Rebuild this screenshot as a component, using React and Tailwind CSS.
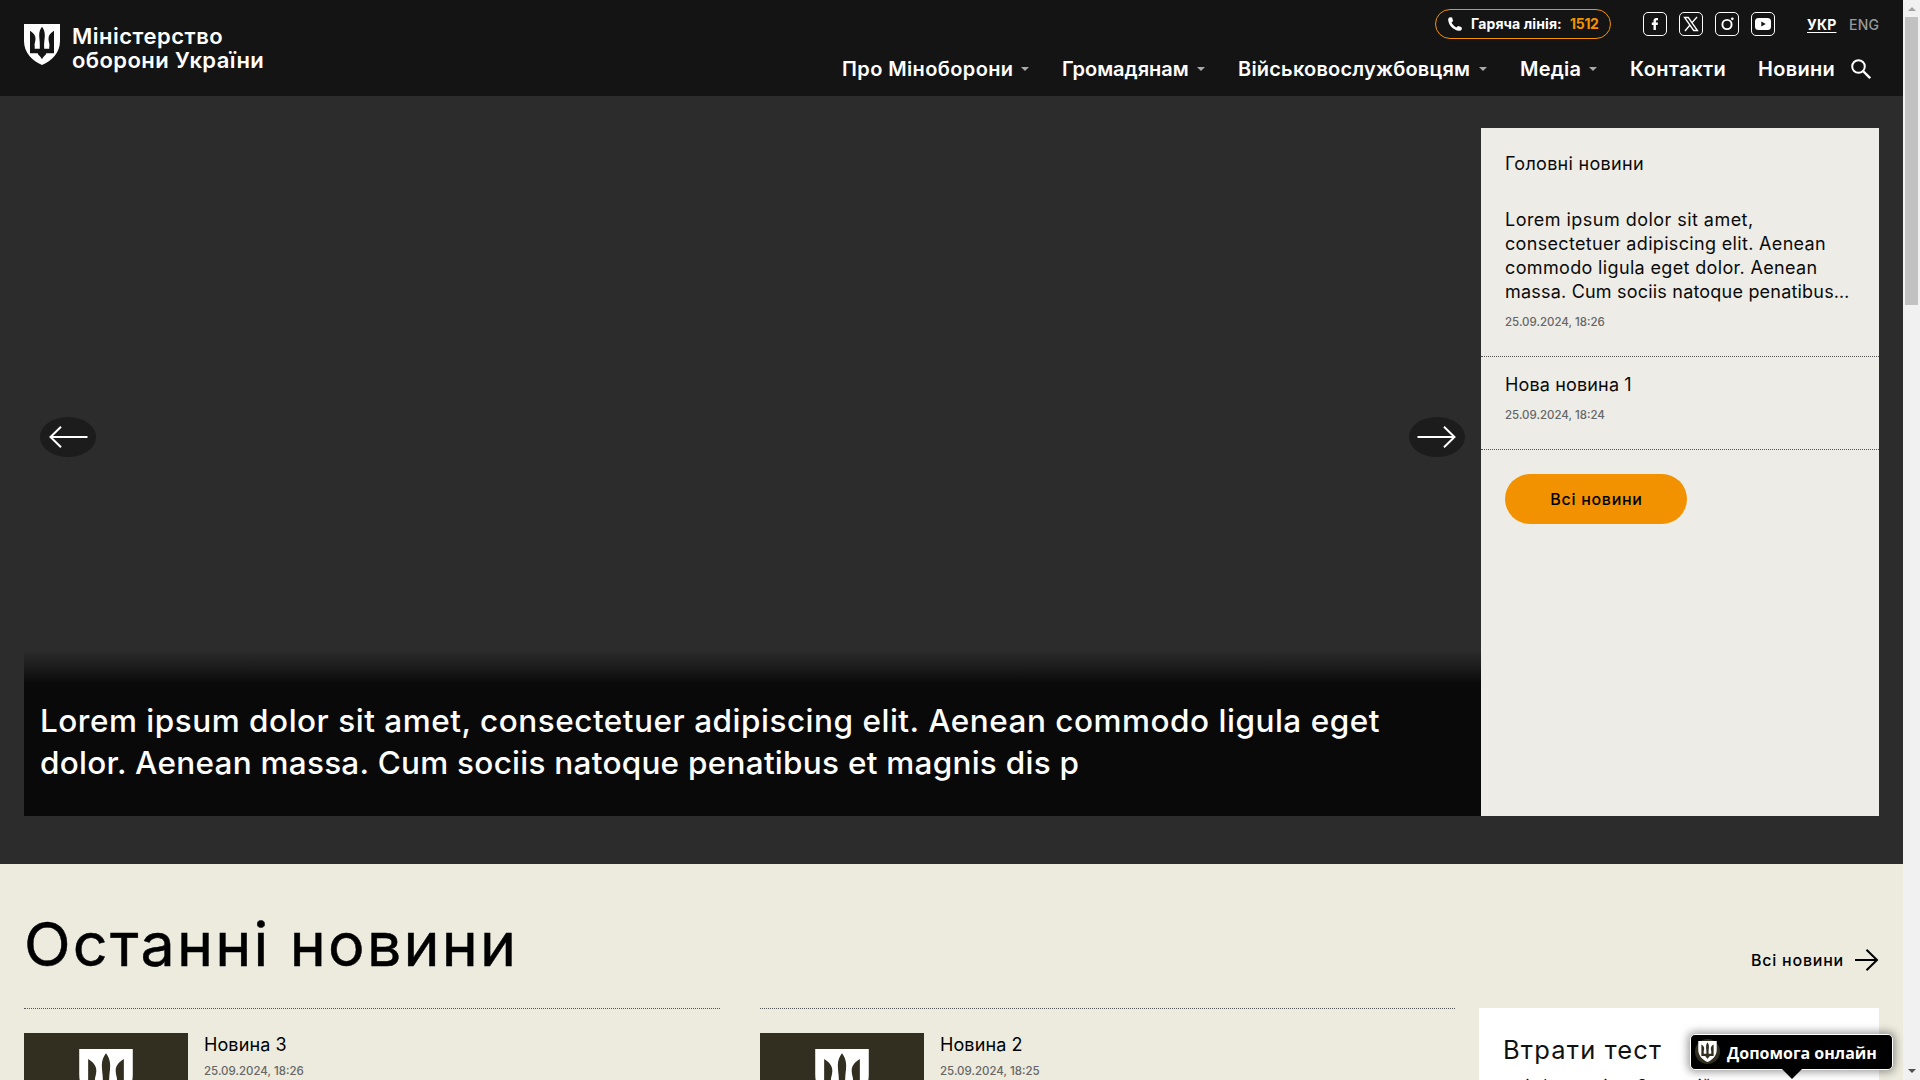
import React from "react";

function Shield({ className, bg }) {
  return (
    <svg viewBox="0 0 36 41" className={className}>
      <path d="M0 0H36V17C36 29 27.5 37 18 41C8.500 37 0 29 0 17Z" fill="#fff" />
      <path
        d="M18 2.800C19.600 4.800 20.800 7.500 20.800 11C20.800 15.500 19.800 18 20.200 24.800H25.300V22.500C26 20 24.500 18 24.500 14.500C24.500 11.500 26.500 8.800 30 6.800V29.300H22.300C21.800 31.500 19.500 32 18 35.300C16.500 32 14.200 31.500 13.700 29.300H6V6.800C9.500 8.800 11.500 11.500 11.500 14.500C11.500 18 10 20 10.700 22.500V24.800H15.800C16.200 18 15.200 15.500 15.200 11C15.200 7.500 16.400 4.800 18 2.800Z"
        fill={bg}
      />
    </svg>
  );
}

const nav = [
  { t: "Про Міноборони", c: "w-[220px] tracking-[0.38px]", m: true },
  { t: "Громадянам", c: "w-[176px] tracking-[0px]", m: true },
  { t: "Військовослужбовцям", c: "w-[282px] tracking-[0.2px]", m: true },
  { t: "Медіа", c: "w-[110px] tracking-[0.2px]", m: true },
  { t: "Контакти", c: "w-[128px] tracking-[0.45px]" },
  { t: "Новини", c: "w-[93px] tracking-[0.3px]" },
];

function Social({ children }) {
  return (
    <svg viewBox="0 0 24 24" className="h-6 w-6" fill="none">
      <rect x="0.5" y="0.5" width="23" height="23" rx="4.500" stroke="#fff" strokeWidth="1" />
      {children}
    </svg>
  );
}

function Header() {
  return (
    <header className="flex h-24 justify-between bg-[#141414] pl-6 text-white">
      <div className="flex pt-6">
        <Shield className="h-[41px] w-9" bg="#141414" />
        <div className="ml-3 text-[22px] leading-6 font-semibold whitespace-nowrap">
          <div className="tracking-[0.5px]">Міністерство</div>
          <div className="tracking-[0.42px]">оборони України</div>
        </div>
      </div>
      <div className="flex w-[1061px] flex-col">
        <div className="flex h-12 items-start justify-end pt-[9px] pr-6">
          <div className="flex h-[30px] w-[176px] items-center rounded-full border border-[#f39200] pl-[11px] text-sm font-bold whitespace-nowrap">
            <svg viewBox="0 0 16 16" className="h-4 w-4" fill="#fff">
              <path d="M3.300 1.200L5.100 1.500L6.100 5L4.500 6.600C5.500 8.700 7.200 10.400 9.300 11.500L11 9.900L14.400 10.900L14.900 12.800C14.500 14.300 13.400 15 12 14.800C6.500 14.200 1.700 9.400 1.200 4C1 2.600 1.800 1.500 3.300 1.200Z" />
            </svg>
            <span className="w-[107px] pl-2 tracking-[0.1px]">Гаряча лінія:</span>
            <span className="tracking-[-0.3px] text-[#f39200]">1512</span>
          </div>
          <div className="mt-[3px] ml-8 flex gap-3">
            <Social>
              <path d="M10.500 18V12.900H8.800V10.500H10.500V9C10.500 7 11.500 6 13.300 6H15V8.300H13.900C13.200 8.300 12.900 8.600 12.900 9.200V10.500H15L14.700 12.900H12.900V18Z" fill="#fff" />
            </Social>
            <Social>
              <path d="M5.500 5.500H9.300L18.500 18.500H14.700Z" stroke="#fff" strokeWidth="1.300" />
              <path d="M18 5L12.900 10.900M11 13L6 19" stroke="#fff" strokeWidth="1.400" />
            </Social>
            <Social>
              <circle cx="12" cy="12.500" r="4.600" stroke="#fff" strokeWidth="1.900" />
              <circle cx="17.300" cy="6.800" r="1.400" fill="#fff" />
            </Social>
            <Social>
              <rect x="4" y="6" width="16" height="12" rx="3.500" fill="#fff" />
              <path d="M10.300 9.400V14.600L14.700 12Z" fill="#141414" />
            </Social>
          </div>
          <div className="ml-8 flex pt-[5px] text-sm leading-[22px] font-semibold">
            <span className="w-[42px] font-bold tracking-[0.2px] underline underline-offset-2">УКР</span>
            <span className="w-[30px] font-medium tracking-[0.2px] text-[#999]">ENG</span>
          </div>
        </div>
        <nav className="mt-[9px] flex h-6 items-center text-[20px] leading-6 font-semibold whitespace-nowrap">
          {nav.map((n) => (
            <div key={n.t} className={`flex shrink-0 items-center ${n.m ? "pr-[33px]" : ""} ${n.c}`}>
              {n.t}
              {n.m && (
                <svg viewBox="0 0 8 4" className="ml-auto h-1 w-2 shrink-0">
                  <path d="M0 0H8L4 4Z" fill="#aaa" />
                </svg>
              )}
            </div>
          ))}
          <svg viewBox="0 0 20 20" className="h-5 w-5 shrink-0" fill="none" stroke="#fff" strokeWidth="2">
            <circle cx="7.500" cy="7.500" r="6.300" />
            <path d="M12 12L19.200 19.200" strokeWidth="2.400" />
          </svg>
        </nav>
      </div>
    </header>
  );
}

function SlideArrow({ flip }) {
  return (
    <div className="flex h-10 w-14 items-center justify-center rounded-[50%] bg-[#1c1c1c]">
      <svg viewBox="0 0 39 22" className={flip ? "mr-px h-[22px] w-[39px] rotate-180" : "h-[22px] w-[39px]"} fill="none" stroke="#fff" strokeWidth="2">
        <path d="M38.500 11H1.500M12 0.700L1.500 11L12 21.300" />
      </svg>
    </div>
  );
}

function Hero() {
  return (
    <section className="flex h-[768px] bg-[#2c2c2c] px-6 pt-8 pb-12">
      <div className="flex w-[1457px] flex-col">
        <div className="flex flex-1 items-start justify-between px-4 pt-[289px]">
          <SlideArrow />
          <SlideArrow flip />
        </div>
        <div className="h-[166px] bg-[linear-gradient(to_bottom,rgba(9,9,9,0)_0px,rgba(9,9,9,0.4)_15px,rgba(9,9,9,1)_34px)] pt-[50px] pl-4 text-[31.500px] leading-[42px] font-medium whitespace-nowrap text-white">
          <div className="tracking-[0.51px]">Lorem ipsum dolor sit amet, consectetuer adipiscing elit. Aenean commodo ligula eget</div>
          <div className="tracking-[0.26px]">dolor. Aenean massa. Cum sociis natoque penatibus et magnis dis p</div>
        </div>
      </div>
      <aside className="w-[398px] bg-[#edece6] pt-6 text-[18px] leading-6 whitespace-nowrap text-[#0a0a0a]">
        <h2 className="pl-6 tracking-[0.3px]">Головні новини</h2>
        <div className="mt-8 border-b border-dotted border-[#555] pb-[26px] pl-6">
          <div className="tracking-[0.46px]">Lorem ipsum dolor sit amet,</div>
          <div className="tracking-[0.33px]">consectetuer adipiscing elit. Aenean</div>
          <div className="tracking-[0.35px]">commodo ligula eget dolor. Aenean</div>
          <div className="tracking-[0.2px]">massa. Cum sociis natoque penatibus…</div>
          <div className="mt-[10px] text-[11.500px] leading-4 font-medium text-[#666]">25.09.2024, 18:26</div>
        </div>
        <div className="mt-4 border-b border-dotted border-[#555] pb-[26px] pl-6">
          <div className="tracking-[0.15px]">Нова новина 1</div>
          <div className="mt-[10px] text-[11.500px] leading-4 font-medium text-[#666]">25.09.2024, 18:24</div>
        </div>
        <button className="mt-6 ml-6 flex h-[50px] w-[182px] items-center justify-center rounded-full bg-[#f39200] pl-px text-[16px] font-medium tracking-[0.7px] text-black">
          Всі новини
        </button>
      </aside>
    </section>
  );
}

function NewsItem({ title, date }) {
  return (
    <article className="flex items-start border-t border-dotted border-[#555] pt-6">
      <div className="flex h-[164px] w-[164px] justify-center bg-[#322f21] pt-4">
        <Shield className="h-[61px] w-[54px]" bg="#322f21" />
      </div>
      <div className="ml-4">
        <div className="text-[18px] leading-6 tracking-[0.1px] text-black">{title}</div>
        <div className="mt-[6px] text-[11.500px] leading-4 font-medium text-[#666]">{date}</div>
      </div>
    </article>
  );
}

function Latest() {
  return (
    <section className="bg-[#ecebde] px-6 pt-[44px]">
      <div className="flex items-end justify-between">
        <h1 className="text-[61px] leading-[72px] tracking-[2.200px] whitespace-nowrap text-black [-webkit-text-stroke:0.5px_#000]">Останні новини</h1>
        <a className="mb-[8px] flex items-center text-[16px] leading-6 font-medium tracking-[0.78px] text-black">
          Всі новини
          <svg viewBox="0 0 24 22" className="ml-[11px] h-[22px] w-6" fill="none" stroke="#000" strokeWidth="2">
            <path d="M0 11H22M11.500 0.700L22 11L11.500 21.300" />
          </svg>
        </a>
      </div>
      <div className="mt-[28px] grid grid-cols-[696px_40px_695px_24px_400px]">
        <NewsItem title="Новина 3" date="25.09.2024, 18:26" />
        <div />
        <NewsItem title="Новина 2" date="25.09.2024, 18:25" />
        <div />
        <div className="h-[300px] bg-white pt-[26px] pl-6 whitespace-nowrap text-[#111]">
          <div className="text-[25.500px] leading-8 tracking-[1.150px]">Втрати тест</div>
          <div className="mt-[7px] text-base leading-6 tracking-[0.4px]">за інформацією Операцій</div>
        </div>
      </div>
    </section>
  );
}

export default function App() {
  return (
    <div className="relative flex h-[1080px] w-[1920px] overflow-hidden font-['Inter',sans-serif]">
      <main className="h-[1080px] w-[1903px] overflow-hidden">
        <Header />
        <Hero />
        <Latest />
      </main>
      <div className="flex w-[17px] flex-col items-center bg-[#f1f1f1]">
        <svg viewBox="0 0 8 4" className="mt-[7px] h-1 w-2">
          <path d="M4 0L8 4H0Z" fill="#a3a3a3" />
        </svg>
        <div className="mt-[6px] h-[288px] w-[13px] bg-[#c1c1c1]" />
        <svg viewBox="0 0 8 4" className="mt-auto mb-[7px] h-1 w-2">
          <path d="M0 0H8L4 4Z" fill="#505050" />
        </svg>
      </div>
      <div className="absolute top-[1034px] left-[1690px] flex flex-col items-center">
        <div className="flex h-9 w-[203px] items-center rounded-[5px] border border-white bg-black pl-1 font-['Open_Sans',sans-serif] text-base leading-6 font-bold whitespace-nowrap text-white shadow-[0_0_8px_2px_rgba(0,0,0,0.4)]">
          <span className="mb-[2px] flex h-[25px] w-[25px] items-center justify-center rounded-full bg-[#322f21]">
            <Shield className="h-[21px] w-[19px]" bg="#322f21" />
          </span>
          <span className="mt-[2px] ml-[7px]">Допомога онлайн</span>
        </div>
        <svg viewBox="0 0 20 10" className="-mt-px h-[10px] w-5">
          <path d="M0 0H20L10 10Z" fill="#000" />
        </svg>
      </div>
    </div>
  );
}
